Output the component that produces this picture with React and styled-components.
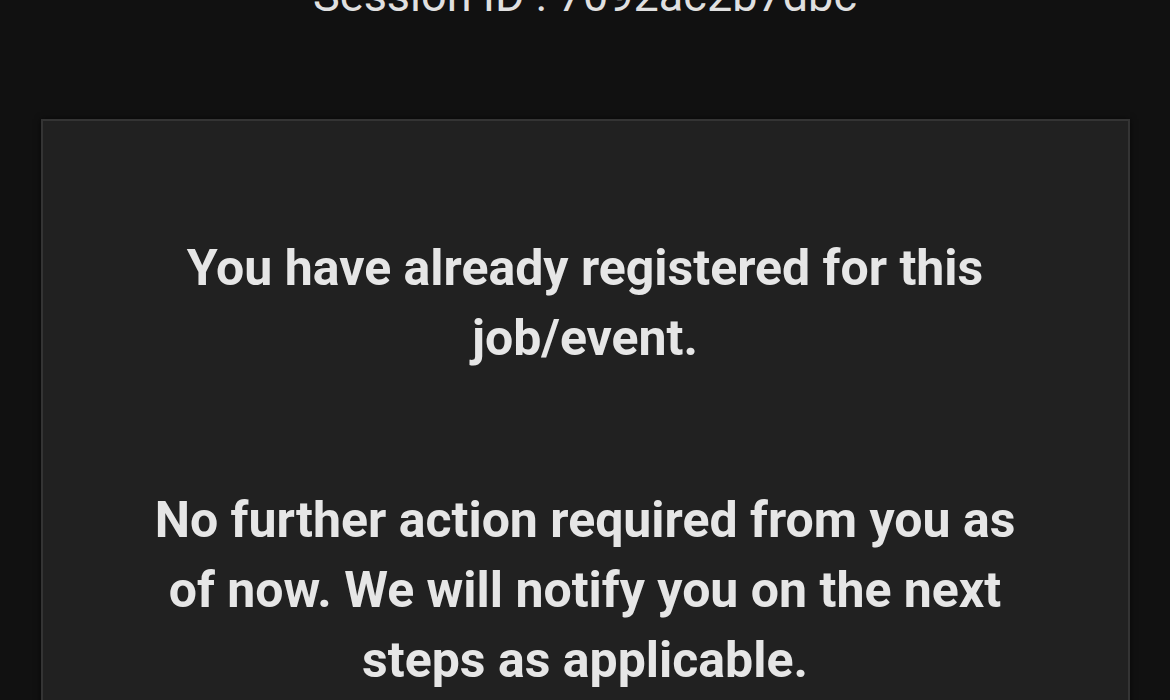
import React from 'react';
import styled, { createGlobalStyle } from 'styled-components';

const GlobalStyle = createGlobalStyle`
  html, body {
    margin: 0;
    padding: 0;
    background: #111111;
  }
  body {
    font-family: Roboto, "Liberation Sans", sans-serif;
    color: #e8e8e8;
  }
`;

const Page = styled.div`
  width: 1170px;
  height: 700px;
  overflow: hidden;
  background: #111111;
  display: flex;
  flex-direction: column;
  align-items: center;
`;

const SessionLine = styled.div`
  margin-top: -28px;
  height: 48px;
  font-size: 45px;
  line-height: 48px;
  font-weight: 400;
  color: #e0e0e0;
  text-align: center;
`;

const Card = styled.div`
  margin-top: 99px;
  width: 1089px;
  box-sizing: border-box;
  background: #212121;
  border: 2px solid #343434;
  box-shadow: 0 0 6px rgba(0, 0, 0, 0.6);
  padding: 112px 60px 60px;
  display: flex;
  flex-direction: column;
  align-items: center;
  gap: 112px;
`;

const Message = styled.p`
  margin: 0;
  max-width: 870px;
  font-size: 50px;
  line-height: 70px;
  font-weight: 700;
  color: #e6e6e6;
  text-align: center;
`;

const App = () => {
  return (
    <>
      <GlobalStyle />
      <Page>
        <SessionLine>Session ID : 7092ac2b7dbc</SessionLine>
        <Card>
          <Message>
            You have already registered for this job/event.
          </Message>
          <Message>
            No further action required from you as of now. We will notify you on the next steps as applicable.
          </Message>
        </Card>
      </Page>
    </>
  );
};

export default App;
